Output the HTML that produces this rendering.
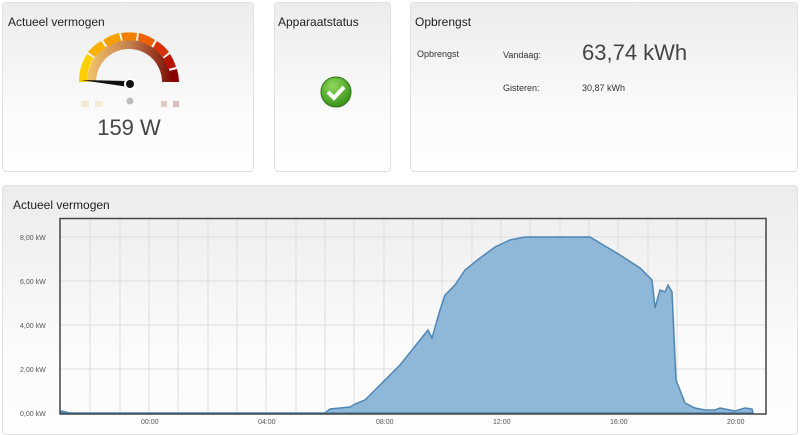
<!DOCTYPE html>
<html><head><style>
body{margin:0;width:800px;height:427px;background:#fff;font-family:"Liberation Sans",sans-serif;position:relative;overflow:hidden}
.p{position:absolute;border:1px solid #e2e2e2;border-radius:4px;background:linear-gradient(#ececec,#fcfcfc 70%,#fdfdfd);box-sizing:border-box}
.t{position:absolute;font-size:12px;color:#222}
.s{position:absolute;font-size:9px;color:#333}
</style></head><body>
<div class="p" style="left:2px;top:2px;width:252px;height:170px">
<div class="t" style="left:5px;top:12px">Actueel vermogen</div>
<svg style="position:absolute;left:0;top:0" width="252" height="170">
<defs><linearGradient id="ig" x1="0" x2="1"><stop offset="0" stop-color="#f3c56a"/><stop offset=".5" stop-color="#c5804f"/><stop offset="1" stop-color="#7a0f08"/></linearGradient></defs>
<path d="M84 79 A42 42 0 0 1 168 79 L159 79 A33 33 0 0 0 93 79Z" fill="url(#ig)"/>
<path d="M76 79 A50 50 0 0 1 84 51 L91 55 A42 42 0 0 0 84 79Z" fill="#fcd000"/>
<path d="M85 49 A50 50 0 0 1 98 38 L103 45 A42 42 0 0 0 92 54Z" fill="#fbb000"/>
<path d="M100 37 A50 50 0 0 1 116 30 L118 38 A42 42 0 0 0 105 44Z" fill="#f6a000"/>
<path d="M118 30 A50 50 0 0 1 134 30 L133 38 A42 42 0 0 0 120 38Z" fill="#f28000"/>
<path d="M136 30 A50 50 0 0 1 152 37 L148 44 A42 42 0 0 0 135 38Z" fill="#ee6000"/>
<path d="M154 38 A50 50 0 0 1 166 49 L160 54 A42 42 0 0 0 150 45Z" fill="#d83000"/>
<path d="M167 51 A50 50 0 0 1 173 64 L165 66 A42 42 0 0 0 160 56Z" fill="#b81400"/>
<path d="M174 66 A50 50 0 0 1 176 79 L168 79 A42 42 0 0 0 166 68Z" fill="#8a0000"/>
<path d="M78 77 L126 78 L126 84 Z" fill="#111"/>
<circle cx="127" cy="81" r="6" fill="#fff"/><circle cx="127" cy="81" r="4" fill="#111"/>
<circle cx="127" cy="98" r="3.5" fill="#bbb"/>
<rect x="78" y="98" width="8" height="6" fill="#f5d8a0" opacity=".5"/><rect x="92" y="98" width="8" height="6" fill="#f5d8a0" opacity=".4"/>
<rect x="158" y="98" width="6" height="6" fill="#c08070" opacity=".4"/><rect x="170" y="98" width="6" height="6" fill="#b06060" opacity=".4"/>
</svg>
<div style="position:absolute;left:0;width:252px;top:112px;text-align:center;font-size:22px;color:#444">159 W</div>
</div>
<div class="p" style="left:274px;top:2px;width:117px;height:170px">
<div class="t" style="left:3px;top:12px">Apparaatstatus</div>
<svg style="position:absolute;left:45px;top:73px" width="32" height="32"><defs><radialGradient id="gc" cx=".4" cy=".3" r=".8"><stop offset="0" stop-color="#8fd85a"/><stop offset="1" stop-color="#2d8a12"/></radialGradient></defs><circle cx="16" cy="16" r="15" fill="url(#gc)" stroke="#2a7010"/><path d="M8 16 L14 22 L24 11" stroke="#fff" stroke-width="4" fill="none"/></svg>
</div>
<div class="p" style="left:410px;top:2px;width:388px;height:170px">
<div class="t" style="left:4px;top:12px">Opbrengst</div>
<div class="s" style="left:6px;top:46px">Opbrengst</div>
<div class="s" style="left:92px;top:47px">Vandaag:</div>
<div style="position:absolute;left:171px;top:37px;font-size:22px;color:#444">63,74 kWh</div>
<div class="s" style="left:92px;top:80px">Gisteren:</div>
<div class="s" style="left:171px;top:80px">30,87 kWh</div>
</div>
<div class="p" style="left:2px;top:185px;width:796px;height:250px">
<div class="t" style="left:10px;top:12px">Actueel vermogen</div>
</div>
<svg style="position:absolute;left:0;top:0" width="800" height="427" font-family="Liberation Sans" font-size="7" fill="#555">
<g stroke="#ddd" stroke-width="1">
<path d="M90 219V413M120 219V413M149 219V413M178 219V413M208 219V413M237 219V413M266 219V413M296 219V413M325 219V413M354 219V413M384 219V413M413 219V413M442 219V413M472 219V413M501 219V413M530 219V413M560 219V413M589 219V413M618 219V413M648 219V413M677 219V413M706 219V413M735 219V413"/>
<path d="M60 237H766M60 281H766M60 325H766M60 369H766"/>
</g>
<path d="M61 411 L70 413 L325 413 L330 409 L340 408 L350 407 L355 404 L365 400 L380 385 L400 365 L420 340 L428 330 L432 338 L440 310 L445 295 L455 285 L465 270 L480 258 L495 247 L510 240 L525 237 L590 237 L600 243 L620 255 L640 268 L652 280 L655 308 L660 290 L665 292 L668 285 L672 292 L676 380 L685 403 L695 408 L705 410 L715 410 L720 408 L735 411 L745 408 L752 409 L753 413 L61 413Z" fill="#8fb7d8" stroke="#4f86b3" stroke-width="1.5"/>
<rect x="60" y="218.5" width="706" height="195.5" fill="none" stroke="#444" stroke-width="1.5"/>
<text x="20" y="240">8,00 kW</text><text x="20" y="284">6,00 kW</text><text x="20" y="328">4,00 kW</text><text x="20" y="372">2,00 kW</text><text x="20" y="416">0,00 kW</text>
<text x="141" y="424">00:00</text><text x="258" y="424">04:00</text><text x="376" y="424">08:00</text><text x="493" y="424">12:00</text><text x="610" y="424">16:00</text><text x="727" y="424">20:00</text>
</svg>
</body></html>
